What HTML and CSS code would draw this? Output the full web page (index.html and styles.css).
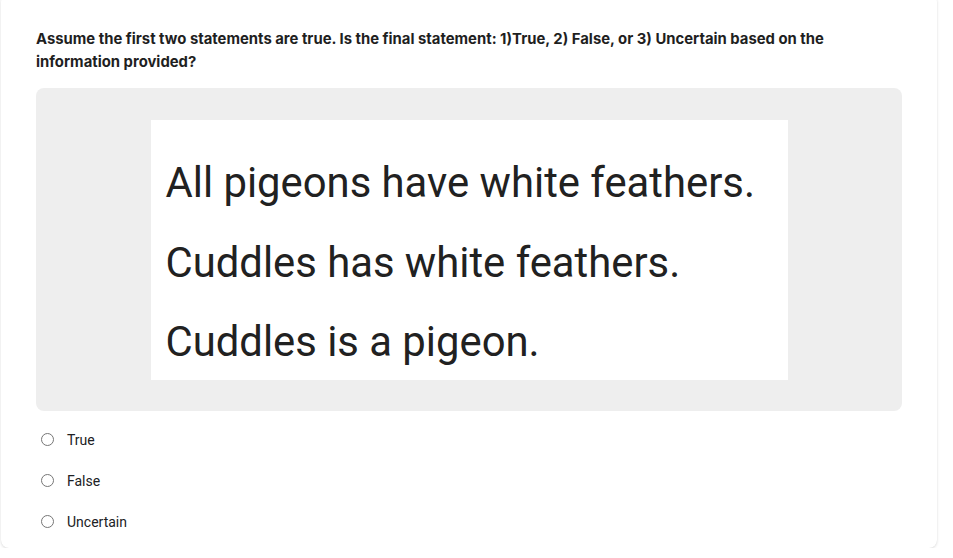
FILE: index.html
```html
<!DOCTYPE html>
<html>
<head>
<meta charset="utf-8">
<link rel="stylesheet" href="styles.css">
</head>
<body>
<div class="card">
  <div class="question">Assume the first two statements are true. Is the final statement: 1)True, 2) False, or 3) Uncertain based on the information provided?</div>
  <div class="figure">
    <div class="picture">
      <div class="stmt">All pigeons have white feathers.</div>
      <div class="stmt">Cuddles has white feathers.</div>
      <div class="stmt">Cuddles is a pigeon.</div>
    </div>
  </div>
  <div class="options">
    <label class="option"><span class="radio"></span><span class="label">True</span></label>
    <label class="option"><span class="radio"></span><span class="label">False</span></label>
    <label class="option"><span class="radio"></span><span class="label">Uncertain</span></label>
  </div>
</div>
</body>
</html>
```

FILE: styles.css
```css
html, body {
  margin: 0;
  padding: 0;
  background: #ffffff;
}
body {
  overflow: hidden;
}
.card {
  box-sizing: border-box;
  margin: -6px 0 0 1px;
  width: 936px;
  height: 554px;
  background: #ffffff;
  border-radius: 8px;
  box-shadow: 0 1px 3px rgba(0, 0, 0, 0.13), 0 0 1px rgba(0, 0, 0, 0.08);
  padding: 34px 35px 0 35px;
}
.question {
  font-family: Inter, "Open Sans", sans-serif;
  font-weight: 700;
  font-size: 14.85px;
  line-height: 23px;
  color: #1f1f1f;
  width: 830px;
}
.figure {
  margin-top: 14px;
  background: #eeeeee;
  border-radius: 8px;
  padding: 32px 0 31px;
  display: flex;
  justify-content: center;
}
.picture {
  box-sizing: border-box;
  width: 637px;
  height: 260px;
  background: #ffffff;
  padding: 23px 0 0 15px;
  overflow: hidden;
}
.stmt {
  font-family: Roboto, sans-serif;
  font-size: 41.8px;
  line-height: 79.5px;
  color: #212121;
  white-space: nowrap;
}
.options {
  display: flex;
  flex-direction: column;
  gap: 17px;
  padding-top: 17px;
}
.option {
  display: flex;
  align-items: center;
  height: 24px;
  gap: 13px;
  padding-left: 5px;
}
.radio {
  box-sizing: border-box;
  width: 13px;
  height: 13px;
  border: 1.3px solid #767676;
  border-radius: 50%;
  flex: none;
  margin-top: -2px;
}
.label {
  font-family: Roboto, sans-serif;
  font-size: 14px;
  color: #202124;
}
```
